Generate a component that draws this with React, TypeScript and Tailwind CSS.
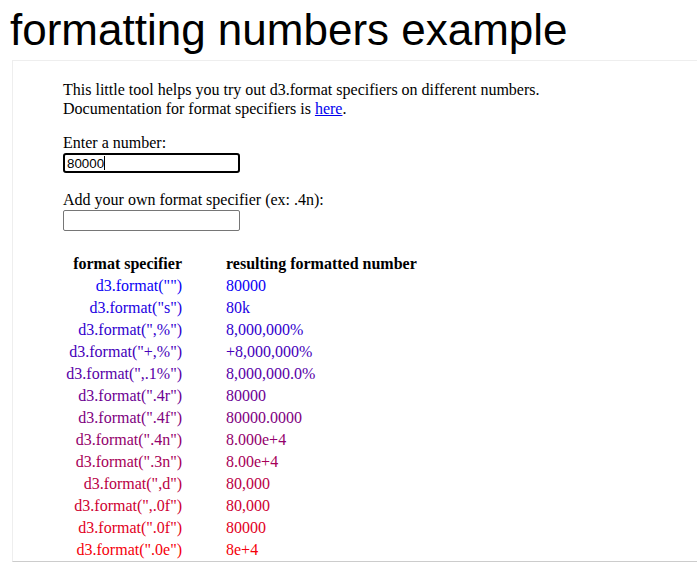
import React from "react";

const rows: [string, string][] = [
  ['d3.format("")', "80000"],
  ['d3.format("s")', "80k"],
  ['d3.format(",%")', "8,000,000%"],
  ['d3.format("+,%")', "+8,000,000%"],
  ['d3.format(",.1%")', "8,000,000.0%"],
  ['d3.format(".4r")', "80000"],
  ['d3.format(".4f")', "80000.0000"],
  ['d3.format(".4n")', "8.000e+4"],
  ['d3.format(".3n")', "8.00e+4"],
  ['d3.format(",d")', "80,000"],
  ['d3.format(",.0f")', "80,000"],
  ['d3.format(".0f")', "80000"],
  ['d3.format(".0e")', "8e+4"],
];

// blue -> red, like a d3 linear colour scale
const rowColor = (i: number) => {
  const t = (i + 0.5) / rows.length;
  const r = Math.round(255 * t);
  const b = Math.round(255 * (1 - t));
  return `rgb(${r}, 0, ${b})`;
};

export default function App() {
  return (
    <div className="w-[697px] h-[566px] overflow-hidden bg-white text-black">
      <div className="h-[60px] pt-[5px] pl-[10px]">
        <h1 className="font-['Liberation_Sans',Arial,sans-serif] text-[44px] leading-[normal] font-normal">
          formatting numbers example
        </h1>
      </div>

      <div className="ml-[12px] h-[502px] border-l border-t border-b border-[#eee] border-b-[#ccc] pl-[50px] pt-[19px] font-['Liberation_Serif','Times_New_Roman',serif] text-[16px] leading-[normal]">
        <p className="leading-[19px]">
          This little tool helps you try out d3.format specifiers on different numbers.
          <br />
          Documentation for format specifiers is{" "}
          <a href="#" className="text-[#0000ee] underline">
            here
          </a>
          .
        </p>

        <div className="mt-4 h-[18px] leading-[18px]">Enter a number:</div>
        <div className="mt-[1px] flex items-center w-[177px] h-[20px] border-2 border-black rounded-[3px] px-[2px] font-['Liberation_Sans',Arial,sans-serif] text-[13.33px]">
          <span>80000</span>
          <span className="w-px h-[14px] bg-black" />
        </div>

        <div className="mt-[18px] h-[18px] leading-[18px]">Add your own format specifier (ex: .4n):</div>
        <input
          className="mt-[1px] block w-[177px] h-[21px] border border-[#767676] rounded-[2px] px-[2px] font-['Liberation_Sans',Arial,sans-serif] text-[13.33px] outline-none"
          type="text"
        />

        <div className="mt-[22px] grid grid-cols-[119px_auto] gap-x-[44px] leading-[22px]">
          <div className="text-right font-bold">format specifier</div>
          <div className="font-bold">resulting formatted number</div>
          {rows.map(([spec, out], i) => (
            <React.Fragment key={spec}>
              <div className="text-right" style={{ color: rowColor(i) }}>
                {spec}
              </div>
              <div style={{ color: rowColor(i) }}>{out}</div>
            </React.Fragment>
          ))}
        </div>
      </div>
    </div>
  );
}
